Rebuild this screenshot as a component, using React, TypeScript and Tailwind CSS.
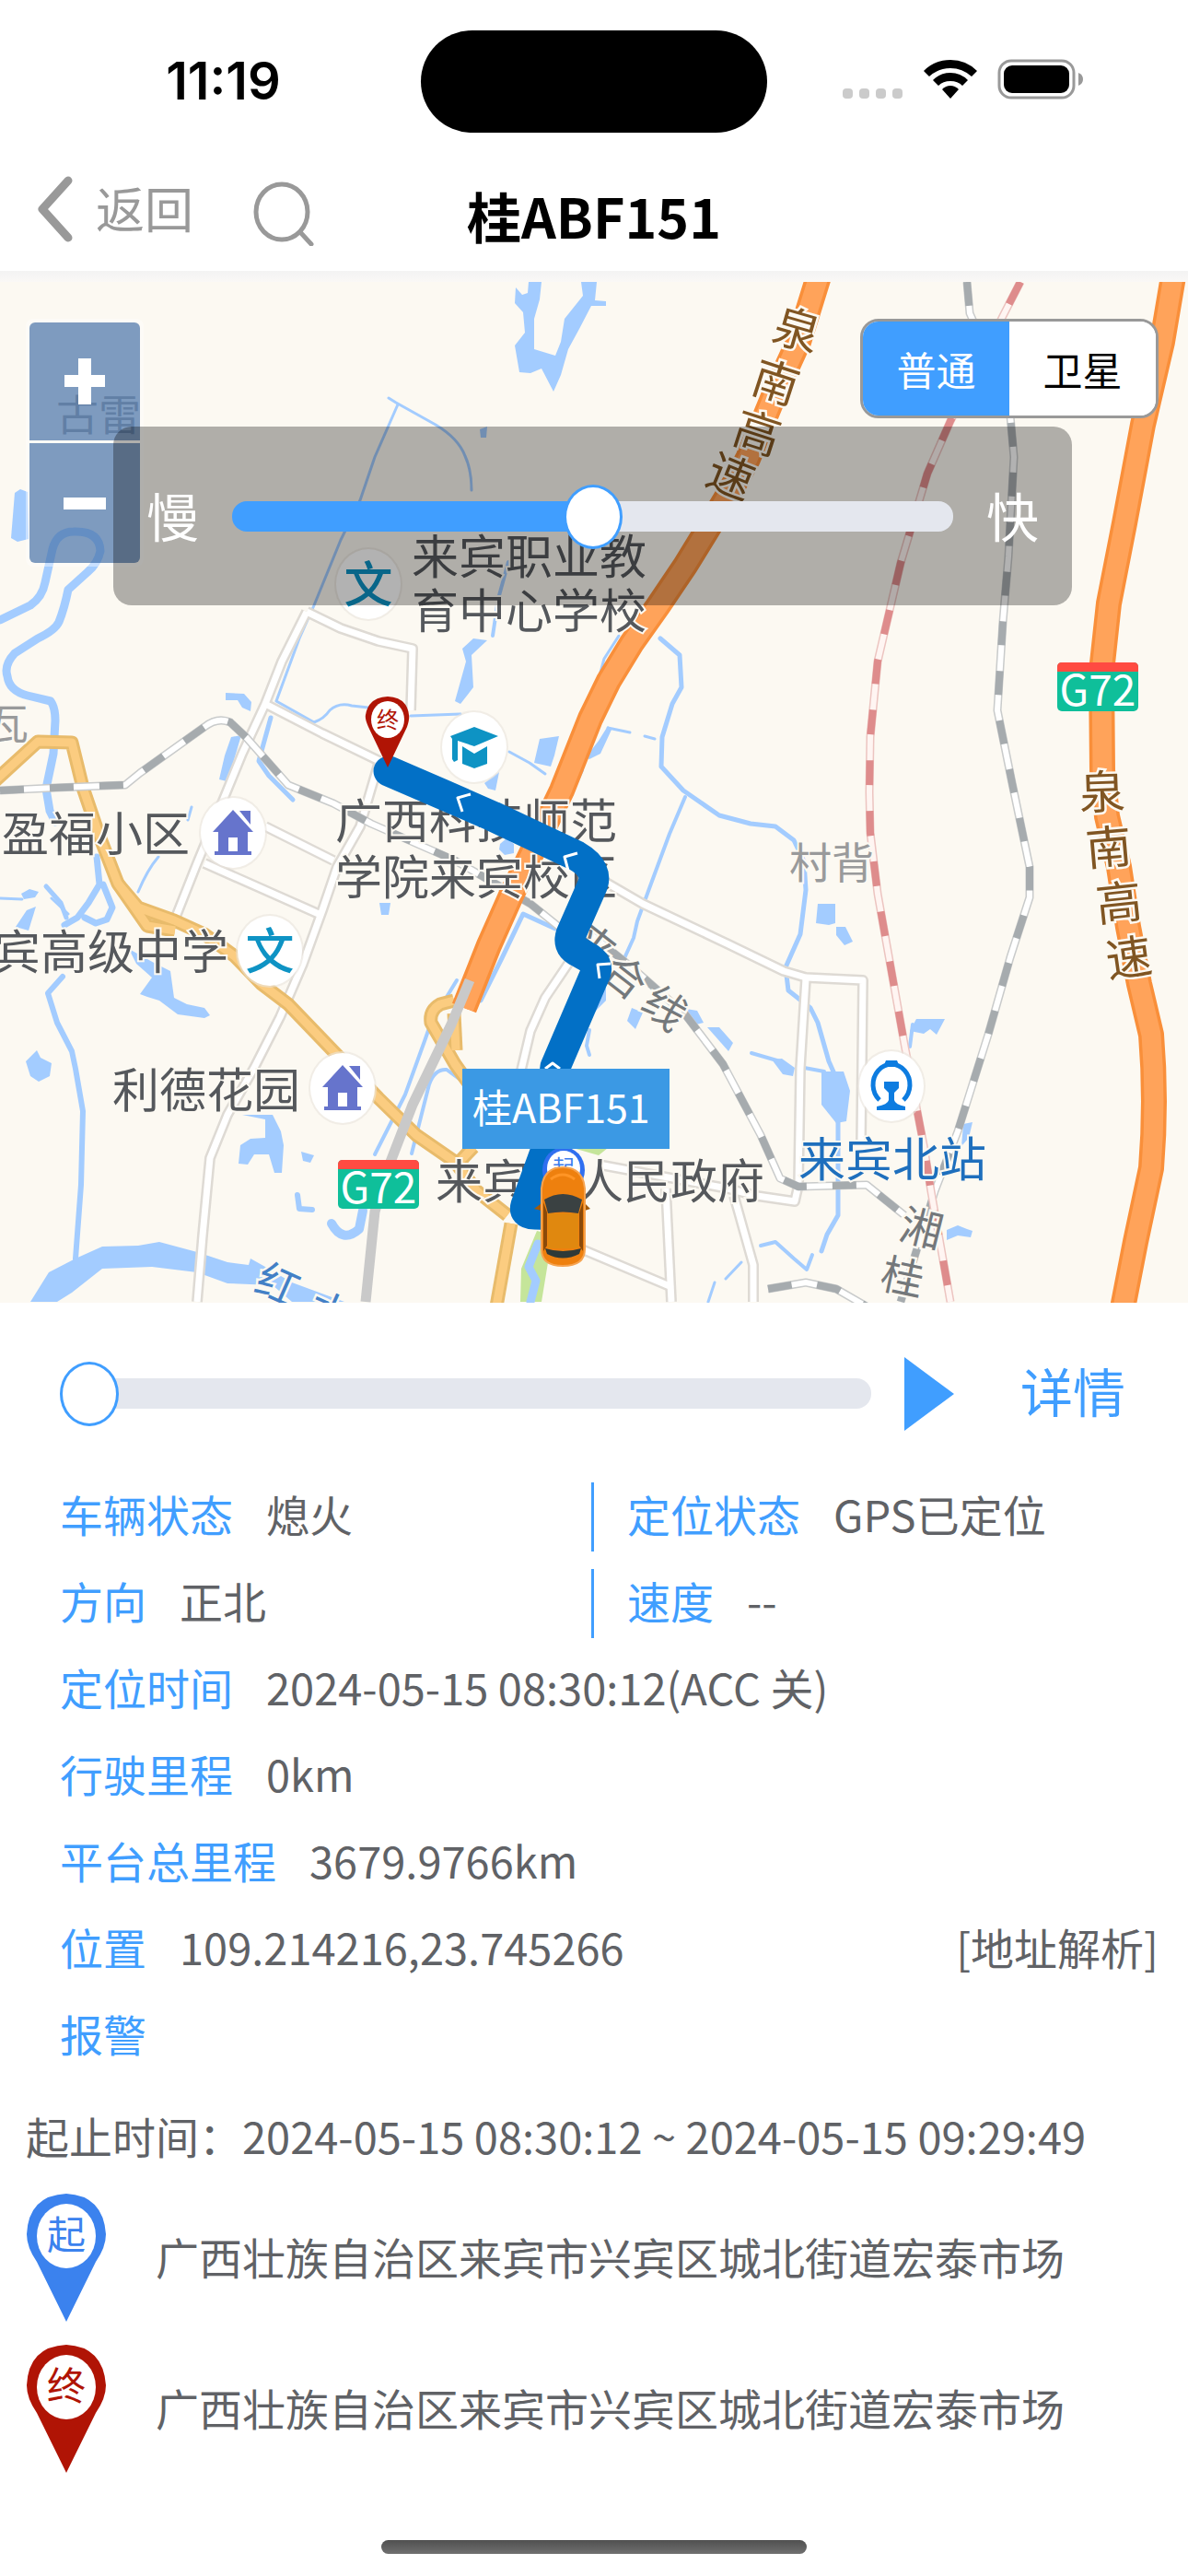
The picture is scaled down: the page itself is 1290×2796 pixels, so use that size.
import { useState } from "react";

type Label = { text: string; x: number; y: number };
type TurnedGlyph = Label & { angle: number };

const streams = [
  { w: 9, d: "M0 673 L33 657 Q46 648 49 632 L57 596 Q62 577 80 577 Q108 576 109 598 Q106 612 95 621 L74 640 Q70 660 64 675 Q60 684 41 693 L16 709 Q4 722 8 734 Q10 750 30 755 L55 761 Q60 768 60 782 L58 818 L50 856 L54 880 L60 892" },
  { w: 3, d: "M422 432 L430 437 L473 461 Q498 476 505 495 Q512 510 512 532" },
  { w: 3, d: "M432 439 L407 496 L391 543 L370 586 L341 657 L325 693 L300 761 L341 784 Q352 780 358 771 Q368 762 382 766 L400 768 M446 777 L500 775" },
  { w: 4, d: "M535 690 L541 650 L552 610" },
  { w: 5, d: "M294 779 L281 826 L292 842 L318 868" },
  { w: 3, d: "M553 816 L575 828 L592 840" },
  { w: 3, d: "M648 745 L656 715 L672 690" },
  { w: 5, d: "M717 693 L738 711 L740 746 L730 764 L719 800 L718 832 L742 858 L781 885 L815 894 L842 897 L862 912 L873 935 L875 966 L869 1014 L853 1050 L856 1075 L880 1094 L888 1110 L900 1152 L908 1170" },
  { w: 4, d: "M744 865 L727 905 L707 959 L692 1000 L688 1018 L678 1040" },
  { w: 3, d: "M660 790 L684 795 M700 799 L711 802" },
  { w: 4, d: "M632 836 L620 862" },
  { w: 5, d: "M910 1210 L910 1319 L898 1340 L892 1358" },
  { w: 4, d: "M816 1143 L847 1152 M868 1158 L895 1163" },
  { w: 4, d: "M988 1136 L991 1112" },
  { w: 4, d: "M826 1352 L842 1348 L862 1366 L876 1378 L882 1362" },
  { w: 3, d: "M769 1413 L776 1392 M788 1388 L805 1370" },
  { w: 6, d: "M68 1060 L52 1078 L62 1110 L78 1141 L82 1160 L90 1206 L88 1286 L82 1366" },
  { w: 7, d: "M105 930 L108 960 L96 980 L84 996 L70 1004 M112 960 L122 985 L116 998 L104 1002 L92 996" },
  { w: 3, d: "M0 975 L24 976 M56 975 L74 992 M150 968 Q160 944 172 930 M208 876 L204 890" },
  { w: 5, d: "M50 962 L66 980 L72 996" },
  { w: 6, d: "M323 1297 L325 1312 L339 1313" },
  { w: 10, d: "M360 1328 Q372 1350 390 1334 L394 1314" },
  { w: 4, d: "M496 1064 L468 1110 L461 1130 L440 1188 L407 1253" },
  { w: 5, d: "M603 1008 L568 992 L545 1040 L522 1086" },
  { w: 4, d: "M447 1252 L466 1177 Q472 1160 485 1161 L500 1172" },
  { w: 4, d: "M640 1118 L637 1135 L640 1145" },
];

const ponds = [
  "574,306 588,306 586,325 580,346 580,379 603,386 609,371 613,346 633,321 631,306 648,306 646,326 658,327 658,332 642,332 629,357 617,379 609,407 601,425 588,400 576,405 564,404 559,375 570,361 568,339 559,329 560,312 567,320 573,318",
  "16,535 22,531 30,534 31,585 19,588 12,584",
  "521,466 529,463 528,475 522,475",
  "514,693 529,695 512,711 514,746 500,764 494,761 506,718 502,704",
  "245,752 265,753 273,762 272,772 263,768 258,760 245,760",
  "251,800 262,798 254,825 246,848 238,846 244,820",
  "586,802 607,799 602,820 598,832 580,828",
  "660,788 664,792 652,818 640,824 636,822 650,804",
  "543,916 550,910 558,916 558,926 548,928 542,922",
  "892,1163 916,1163 923,1184 919,1217 908,1219 892,1199",
  "838,1150 849,1149 863,1159 861,1168 850,1166",
  "888,981 907,981 907,1002 900,1004 886,1002",
  "908,1006 918,1006 926,1022 917,1026 908,1015",
  "988,1119 995,1106 1026,1106 1017,1123 1010,1117 1003,1122",
  "768,1115 781,1115 796,1132 791,1141",
  "686,1094 698,1099 690,1117 681,1108",
  "745,1095 757,1097 764,1110 756,1112",
  "1028,1335 1040,1330 1050,1334 1056,1336 1054,1343 1040,1341 1028,1346",
  "1046,1220 1056,1218 1052,1235 1044,1244",
  "33,1413 53,1381 82,1366 111,1353 150,1352 173,1348 214,1359 247,1370 270,1373 272,1366 288,1375 317,1392 374,1413 317,1413 296,1395 247,1393 214,1381 165,1375 111,1377 78,1403 62,1413",
  "28,1152 40,1140 44,1148 56,1154 54,1168 42,1174 33,1168",
  "23,970 32,965 42,968 38,974 26,976",
  "17,1006 29,988 39,984 31,1010",
  "152,1079 165,1061 148,1046 140,1030 169,1046 185,1054 189,1083 203,1090 222,1094 228,1102 222,1105 193,1101 173,1086 160,1082",
  "259,1263 261,1243 272,1236 288,1235 288,1215 263,1210 296,1210 305,1228 308,1243 306,1273 298,1273 292,1253 276,1253 269,1264",
  "327,1250 341,1254 337,1262 329,1260",
  "412,980 424,980 422,993 414,993",
  "526,850 542,838 538,858 530,856",
  "646,1066 658,1070 658,1086 646,1098",
];

const minorRoads = [
  "M333 664 L306 718 L288 764 L263 818 L247 857 L214 937 L191 995",
  "M333 664 L370 682 L411 696 L448 704 L446 771",
  "M288 764 L350 796 L412 826",
  "M411 829 L391 897 L366 941 L350 988 L329 1046 L304 1104 L276 1159 L247 1210 L228 1257 L220 1341 L214 1413",
  "M222 937 L346 992",
  "M288 897 L362 934",
  "M617 1046 L592 1083 L576 1119 L564 1170",
  "M655 956 L698 981 L789 1024 L851 1054 L875 1061 L937 1064 L935 1240",
  "M875 1062 L869 1159 L867 1286 L863 1304 L822 1298 L790 1290 L650 1264",
  "M723 1290 L729 1413",
  "M797 1298 L818 1373 L818 1413",
  "M632 1356 L727 1396",
];

const arterials = [
  "M-6 848 L41 805 L78 806 L90 855 L107 905 L128 959 L160 1005 L190 1010",
  "M128 959 L150 985 L189 999 L222 1014 L255 1038 L284 1068 L313 1090 L362 1141 L411 1192 L452 1232 L494 1261 L518 1293 L551 1319",
  "M555 1328 L539 1418",
  "M493 1086 L478 1090 Q466 1097 468 1110 L494 1155 L512 1180",
  "M493 1100 L495 1140",
  "M514 1245 L498 1262",
];

const railways = [
  "M1050 306 L1053 340 Q1080 400 1096 440 L1101 496 L1095 604 L1089 675 L1083 771 L1099 850 L1118 941 L1118 974 L1097 1039 L1073 1123 L1040 1228 L1015 1293 L978 1413",
  "M0 858 L60 855 L136 852 L152 839 L222 789 Q236 778 250 784 L267 800 L313 852 L362 872 L403 894 L494 934 L576 981 L612 1010 L645 1017 L686 1050 L744 1101 L785 1155 L826 1232 L847 1279 L867 1288 L941 1286 L982 1319",
  "M834 1399 L875 1392 L908 1399 L941 1418",
];

const expressLine =
  "M1108 306 L1089 343 L1032 457 L1007 514 L978 611 L953 718 L945 800 L944 860 L945 904 L953 970 L982 1133 L1003 1243 L1011 1293 L1032 1413";

const motorways = [
  "M889 300 L867 371 L840 430 L812 498 L789 540 L768 575 L744 614 L715 657 L686 698 L661 739 L641 780 L610 858 L555 972 L531 1026 L504 1094",
  "M1274 300 L1262 371 L1241 461 L1221 568 L1204 655 L1196 729 L1197 836 L1202 886 L1215 941 L1225 1006 L1237 1068 L1250 1123 Q1256 1195 1250 1268 L1233 1348 L1219 1420",
];

const placeLabels: Label[] = [
  { text: "来宾职业教", x: 447, y: 623 },
  { text: "育中心学校", x: 447, y: 682 },
  { text: "广西科技师范", x: 364, y: 910 },
  { text: "学院来宾校区", x: 364, y: 971 },
  { text: "盈福小区", x: 2, y: 924 },
  { text: "宾高级中学", x: -7, y: 1052 },
  { text: "利德花园", x: 122, y: 1202 },
  { text: "来宾市人民政府", x: 473, y: 1301 },
];

const villageLabels: Label[] = [
  { text: "古雷", x: 61, y: 467 },
  { text: "瓦", x: -15, y: 802 },
  { text: "村背", x: 857, y: 953 },
];

const motorwayGlyphs: TurnedGlyph[] = [
  { text: "泉", x: 865, y: 359, angle: 16 },
  { text: "南", x: 842, y: 416, angle: 18 },
  { text: "高", x: 822, y: 471, angle: 18 },
  { text: "速", x: 793, y: 518, angle: 22 },
  { text: "泉", x: 1197, y: 861, angle: -2 },
  { text: "南", x: 1204, y: 921, angle: -5 },
  { text: "高", x: 1215, y: 981, angle: -6 },
  { text: "速", x: 1226, y: 1041, angle: -8 },
];

const railwayGlyphs: TurnedGlyph[] = [
  { text: "来", x: 645, y: 1026, angle: 38 },
  { text: "合", x: 679, y: 1060, angle: 38 },
  { text: "线", x: 722, y: 1094, angle: 38 },
  { text: "湘", x: 1001, y: 1333, angle: 14 },
  { text: "桂", x: 980, y: 1386, angle: 12 },
];

const riverGlyphs: TurnedGlyph[] = [
  { text: "红", x: 302, y: 1394, angle: 24 },
  { text: "水", x: 358, y: 1424, angle: 24 },
];

function Turned({ glyphs, size, fill }: { glyphs: TurnedGlyph[]; size: number; fill: string }) {
  return (
    <g fill={fill} fontSize={size} textAnchor="middle" stroke="#fcf9f2" strokeWidth="5" paintOrder="stroke">
      {glyphs.map((g) => (
        <text key={g.text + g.x} x={g.x} y={g.y + 17} transform={`rotate(${g.angle} ${g.x} ${g.y})`}>
          {g.text}
        </text>
      ))}
    </g>
  );
}

function Poi({ x, y, children }: { x: number; y: number; children: React.ReactNode }) {
  return (
    <g transform={`translate(${x} ${y})`}>
      <ellipse rx="37" ry="40" fill="#e9e5dd" opacity="0.6" />
      <ellipse rx="35" ry="38" fill="#fff" />
      {children}
    </g>
  );
}

function House() {
  return (
    <g fill="#6674cc">
      <path d="M0 -25 L22 -1 L16 -1 L16 20 L20 20 L20 24 L-20 24 L-20 20 L-16 20 L-16 -1 L-22 -1 Z" />
      <path d="M7 -24 L19 -24 L19 -9 Z" />
      <path d="M-5 5 H5 V20 H-5 Z" fill="#fff" />
    </g>
  );
}

function SchoolMark() {
  return (
    <text y="20" textAnchor="middle" fontSize="53" fontWeight="500" fill="#0e93c4">
      文
    </text>
  );
}

function RoadShield({ x, y }: { x: number; y: number }) {
  return (
    <g transform={`translate(${x} ${y})`}>
      <rect width="88" height="53" rx="5" fill="#0fbf9a" />
      <path d="M0 10 V5 Q0 0 5 0 H83 Q88 0 88 5 V10 Z" fill="#ff4b42" />
      <text x="44" y="47" textAnchor="middle" fontSize="46" fill="#fff">
        G72
      </text>
    </g>
  );
}

function Car() {
  return (
    <g>
      <path d="M588 1306 L580 1312 L588 1314 Z M635 1306 L641 1312 L635 1314 Z" fill="#a35a0a" />
      <path d="M588 1290 Q590 1267 611 1267 Q633 1267 635 1290 V1356 Q635 1374 611 1374 Q588 1374 588 1356 Z" fill="#ee800e" stroke="#f6a350" strokeWidth="2" />
      <path d="M590 1305 V1358 L594 1352 V1316 Z M633 1305 V1358 L629 1352 V1316 Z" fill="#8a4a0a" />
      <path d="M591 1302 Q611 1290 632 1302 L628 1317 Q611 1314 595 1317 Z" fill="#3a4142" />
      <rect x="595" y="1317" width="33" height="38" fill="#e0880f" />
      <path d="M592 1355 Q611 1361 631 1355 L629 1361 Q611 1370 594 1361 Z" fill="#2f3a38" />
      <path d="M598 1280 Q611 1270 624 1280" fill="none" stroke="#ff9526" strokeWidth="3" />
    </g>
  );
}

function MapCanvas({ plate }: { plate: string }) {
  return (
    <svg
      viewBox="0 306 1290 1108"
      preserveAspectRatio="xMidYMid slice"
      className="block h-full w-full"
      role="img"
      aria-label="行驶轨迹地图"
    >
      <rect y="306" width="1290" height="1108" fill="#fcf9f2" />
      <path d="M565 1413 L566 1377 L583 1336 L600 1340 L588 1413 Z M622 1246 L660 1246 L650 1254 Z" fill="#c5e59a" />
      <g fill="none" stroke="#a3ccff" strokeLinecap="round" strokeLinejoin="round">
        {streams.map((s) => (
          <path key={s.d} d={s.d} strokeWidth={s.w} />
        ))}
        <path d="M584 1350 L574 1375 L582 1390 L576 1413" strokeWidth="9" />
      </g>
      <g fill="#a3ccff">
        {ponds.map((p) => (
          <polygon key={p} points={p} />
        ))}
      </g>
      <g fill="none" strokeLinejoin="round">
        {minorRoads.map((d) => (
          <path key={d} d={d} stroke="#dedad4" strokeWidth="12" />
        ))}
        {minorRoads.map((d) => (
          <path key={d} d={d} stroke="#fff" strokeWidth="7" />
        ))}
        {arterials.map((d) => (
          <path key={d} d={d} stroke="#e8bb6b" strokeWidth="15" />
        ))}
        {arterials.map((d) => (
          <path key={d} d={d} stroke="#fbcc80" strokeWidth="9" />
        ))}
        {railways.map((d) => (
          <g key={d}>
            <path d={d} stroke="#c9cbcb" strokeWidth="9" />
            <path d={d} stroke="#fff" strokeWidth="6" />
            <path d={d} stroke="#a6abae" strokeWidth="8" strokeDasharray="26 28" />
          </g>
        ))}
        <path d={expressLine} stroke="#ecc4c0" strokeWidth="9" />
        <path d={expressLine} stroke="#fff5f2" strokeWidth="6" />
        <path d={expressLine} stroke="#de8c8c" strokeWidth="8" strokeDasharray="27 28" />
        {motorways.map((d) => (
          <g key={d}>
            <path d={d} stroke="#f98f3a" strokeWidth="28" />
            <path d={d} stroke="#ffa35a" strokeWidth="21" />
          </g>
        ))}
        <path d="M510 1064 L490 1112 L448 1199 L424 1261 L407 1315 L397 1413" stroke="#c9c9c9" strokeWidth="11" />
      </g>

      <g fill="#999a9b" fontSize="46" stroke="#fcf9f2" strokeWidth="4" paintOrder="stroke">
        {villageLabels.map((l) => (
          <text key={l.text} x={l.x} y={l.y}>
            {l.text}
          </text>
        ))}
      </g>
      <g fill="#55585c" fontSize="51" stroke="#fcf9f2" strokeWidth="4" paintOrder="stroke">
        {placeLabels.map((l) => (
          <text key={l.text} x={l.x} y={l.y}>
            {l.text}
          </text>
        ))}
        <text x="867" y="1277" fill="#1e6fbd">
          来宾北站
        </text>
      </g>
      <Turned glyphs={motorwayGlyphs} size={50} fill="#805522" />
      <Turned glyphs={railwayGlyphs} size={46} fill="#74787b" />
      <Turned glyphs={riverGlyphs} size={46} fill="#4380c6" />

      <Poi x={400} y={634}><SchoolMark /></Poi>
      <Poi x={293} y={1032}><SchoolMark /></Poi>
      <Poi x={253} y={904}><House /></Poi>
      <Poi x={372} y={1181}><House /></Poi>
      <Poi x={515} y={811}>
        <g fill="#0e93c4">
          <path d="M0 -22 L26 -12 L0 -1 L-18 -7 V14 L-22 16 L-24 13 V-9 L-26 -12 Z" />
          <path d="M-13 -1 L0 7 L14 -1 V18 L0 23 L-13 18 Z" />
        </g>
      </Poi>
      <Poi x={968} y={1179}>
        <path d="M-13 15 A20 22 0 1 1 13 15" fill="none" stroke="#0d7ce0" strokeWidth="5" />
        <path d="M-6 -28 H6 L9 -21 H-9 Z M-8 -5 H8 V2 L3 7 V15 Q4 20 15 22 V26 H-16 V22 Q-4 20 -3 15 V7 L-8 2 Z" fill="#0d7ce0" />
      </Poi>
      <RoadShield x={1148} y={719} />
      <RoadShield x={367} y={1259} />

      <path
        d="M422 837 L480 862 L535 886 L626 929 Q652 944 642 964 L620 1014 Q616 1026 626 1032 L640 1040 Q652 1048 645 1060 L603 1158 L592 1250 L571 1308 Q568 1318 580 1318 L612 1319"
        fill="none"
        stroke="#0270c6"
        strokeWidth="33"
        strokeLinecap="round"
        strokeLinejoin="round"
      />
      <g fill="none" stroke="#fff" strokeWidth="3" strokeLinejoin="round">
        <path d="M511 862 L497 866 L502 881" />
        <path d="M627 926 L613 930 L617 945" />
        <path d="M663 1046 L649 1047 L651 1062" />
        <path d="M592 1160 L600 1154 L608 1160" />
      </g>

      <path d="M421 833 L400 789 Q396 780 397 776 Q400 757 421 756 Q442 757 444 776 Q445 780 442 789 Z" fill="#b01405" />
      <ellipse cx="421" cy="781" rx="18" ry="20" fill="#fff" />
      <text x="421" y="790" textAnchor="middle" fontSize="24" fill="#b01405">
        终
      </text>

      <ellipse cx="612" cy="1270" rx="23" ry="25" fill="#2f6ff0" />
      <ellipse cx="612" cy="1268" rx="18" ry="19" fill="#fff" />
      <text x="612" y="1276" textAnchor="middle" fontSize="24" fill="#3b7ded">
        起
      </text>
      <rect x="502" y="1160" width="225" height="87" fill="#3b99e4" />
      <text x="513" y="1219" fontSize="43" fill="#fff">
        {plate}
      </text>
      <Car />
    </svg>
  );
}

function PinIcon({ color, char }: { color: string; char: string }) {
  return (
    <svg viewBox="0 0 87 142" className="h-[142px] w-[87px] shrink-0" aria-hidden="true">
      <path d="M44 139 L12 74 Q1 58 1 44 Q3 2 44 0 Q84 2 87 44 Q87 58 76 74 Z" fill={color} />
      <ellipse cx="44" cy="46" rx="32" ry="35" fill="#fff" />
      <text x="44" y="60" textAnchor="middle" fontSize="42" fill={color}>
        {char}
      </text>
    </svg>
  );
}

const sliderClass =
  "h-[70px] min-w-0 flex-1 cursor-pointer appearance-none bg-transparent [&::-webkit-slider-runnable-track]:h-[33px] [&::-webkit-slider-runnable-track]:rounded-2xl [&::-webkit-slider-runnable-track]:bg-[linear-gradient(to_right,#409eff_var(--fill),#e4e7ee_var(--fill))] [&::-webkit-slider-thumb]:-mt-[18px] [&::-webkit-slider-thumb]:h-[70px] [&::-webkit-slider-thumb]:w-[64px] [&::-webkit-slider-thumb]:appearance-none [&::-webkit-slider-thumb]:rounded-[50%] [&::-webkit-slider-thumb]:border-[3px] [&::-webkit-slider-thumb]:border-[#409eff] [&::-webkit-slider-thumb]:bg-white";

function Slider({ label, value, onChange }: { label: string; value: number; onChange: (v: number) => void }) {
  return (
    <input
      type="range"
      aria-label={label}
      min={0}
      max={100}
      value={value}
      onChange={(e) => onChange(Number(e.target.value))}
      className={sliderClass}
      style={{ "--fill": `${value}%` } as React.CSSProperties}
    />
  );
}

function Field({ label, children }: { label: string; children?: React.ReactNode }) {
  return (
    <div className="flex min-w-0 flex-1 items-center gap-9 pb-2">
      <dt className="text-[#409eff]">{label}</dt>
      <dd>{children}</dd>
    </div>
  );
}

function StatusBar() {
  return (
    <div className="grid h-[176px] grid-cols-[1fr_376px_1fr] items-center">
      <time className="pl-7 text-center font-['Inter'] text-[56px] leading-none font-semibold">11:19</time>
      <div className="h-[111px] rounded-full bg-black" />
      <div className="flex items-center justify-end gap-[22px] pr-[113px] pb-1">
        <svg viewBox="0 0 66 42" className="h-[42px] w-[66px]" fill="#cbcbcb" aria-hidden="true">
          <rect x="0" y="31" width="11" height="11" rx="4" />
          <rect x="18" y="31" width="11" height="11" rx="4" />
          <rect x="36" y="31" width="11" height="11" rx="4" />
          <rect x="54" y="31" width="11" height="11" rx="4" />
        </svg>
        <svg viewBox="0 0 58 42" className="h-[42px] w-[58px]" aria-hidden="true">
          <path d="M29 0 Q46 0 58 12 L52 18 Q42 9 29 9 Q16 9 6 18 L0 12 Q12 0 29 0 Z" />
          <path d="M29 14 Q40 14 48 22 L42 28 Q37 23 29 23 Q21 23 16 28 L10 22 Q18 14 29 14 Z" />
          <path d="M29 28 Q34 28 38 32 L29 42 L20 32 Q24 28 29 28 Z" />
        </svg>
        <svg viewBox="0 0 94 44" className="h-[44px] w-[94px]" aria-hidden="true">
          <rect x="2" y="2" width="81" height="40" rx="13" fill="none" stroke="#999" strokeWidth="3" />
          <rect x="7" y="7" width="71" height="30" rx="9" />
          <path d="M88 15 Q93 17 93 22 Q93 27 88 29 Z" fill="#999" />
        </svg>
      </div>
    </div>
  );
}

export default function App() {
  const plate = "桂ABF151";
  const [speed, setSpeed] = useState(50);
  const [progress, setProgress] = useState(0);
  const [satellite, setSatellite] = useState(false);
  const address = "广西壮族自治区来宾市兴宾区城北街道宏泰市场";

  return (
    <main className="flex min-h-screen flex-col bg-white font-['Noto_Sans_CJK_SC',sans-serif] text-[47px] leading-none text-[#606266]">
      <header className="bg-white text-black">
        <StatusBar />
        <div className="grid h-[118px] grid-cols-[1fr_auto_1fr] items-center px-10">
          <div className="flex items-center gap-16 pb-4 text-[#999]">
            <button type="button" className="flex items-center gap-6 text-[53px]">
              <svg viewBox="0 0 40 72" className="h-[72px] w-10" fill="none" stroke="currentColor" strokeWidth="9" strokeLinecap="round" strokeLinejoin="round" aria-hidden="true">
                <path d="M34 5 L6 36 L34 67" />
              </svg>
              <span className="pb-1">返回</span>
            </button>
            <button type="button" aria-label="搜索" className="pt-2">
              <svg viewBox="0 0 68 72" className="h-[72px] w-[68px]" fill="none" stroke="currentColor" strokeWidth="5" strokeLinecap="round" aria-hidden="true">
                <ellipse cx="32" cy="35" rx="28" ry="30" />
                <path d="M52 57 L64 70" />
              </svg>
            </button>
          </div>
          <h1 className="pb-1 text-[59px] font-bold">{plate}</h1>
        </div>
        <div className="h-3 bg-linear-to-b from-[#f3f3f3] to-[#faf8f6]" />
      </header>

      <section className="relative h-[1108px] overflow-hidden">
        <MapCanvas plate={plate} />

        <div className="absolute top-10 left-7 flex flex-col rounded-lg bg-white/40 p-1">
          <div className="flex flex-col gap-[3px]">
            <button type="button" aria-label="放大" className="flex h-32 w-[120px] items-center justify-center rounded-t-md bg-[#003c88]/50">
              <svg viewBox="0 0 46 50" className="h-[50px] w-[46px]" fill="#fff" aria-hidden="true">
                <path d="M16 0 H30 V18 H45 V31 H30 V50 H16 V31 H1 V18 H16 Z" />
              </svg>
            </button>
            <button type="button" aria-label="缩小" className="flex h-[130px] w-[120px] items-center justify-center rounded-b-md bg-[#003c88]/50">
              <svg viewBox="0 0 46 13" className="h-[13px] w-[46px]" fill="#fff" aria-hidden="true">
                <path d="M0 0 H46 V13 H0 Z" />
              </svg>
            </button>
          </div>
        </div>

        <div className="absolute top-10 right-8 grid h-[108px] w-[324px] grid-cols-2 overflow-hidden rounded-[20px] border-[3px] border-[#999] bg-white text-[43px]">
          <button
            type="button"
            aria-pressed={!satellite}
            onClick={() => setSatellite(false)}
            className={satellite ? "bg-white text-black" : "bg-[#409eff] text-white"}
          >
            普通
          </button>
          <button
            type="button"
            aria-pressed={satellite}
            onClick={() => setSatellite(true)}
            className={satellite ? "bg-[#409eff] text-white" : "bg-white text-black"}
          >
            卫星
          </button>
        </div>

        <div className="absolute top-[157px] right-[126px] left-[123px] flex h-[194px] items-center gap-9 rounded-[20px] bg-black/30 px-9 text-[57px] text-white">
          <span className="pb-1">慢</span>
          <Slider label="播放速度" value={speed} onChange={setSpeed} />
          <span className="pb-1">快</span>
        </div>
      </section>

      <section className="flex h-[185px] items-center pt-3 pr-[68px] pl-[65px]">
        <Slider label="播放进度" value={progress} onChange={setProgress} />
        <button type="button" aria-label="播放" className="ml-9">
          <svg viewBox="0 0 54 80" className="h-20 w-[54px]" fill="#409eff" aria-hidden="true">
            <path d="M0 0 L54 40 L0 80 Z" />
          </svg>
        </button>
        <button type="button" className="ml-[72px] pb-2 text-[57px] text-[#409eff]">
          详情
        </button>
      </section>

      <dl className="flex flex-col pr-8 pl-[65px] [&>div]:h-[94px]">
        <div className="-mr-8 grid grid-cols-[577px_1fr] items-center">
          <Field label="车辆状态">熄火</Field>
          <div className="flex h-[75px] border-l-[3px] border-[#409eff] pl-9">
            <Field label="定位状态">GPS已定位</Field>
          </div>
        </div>
        <div className="-mr-8 grid grid-cols-[577px_1fr] items-center">
          <Field label="方向">正北</Field>
          <div className="flex h-[75px] border-l-[3px] border-[#409eff] pl-9">
            <Field label="速度">--</Field>
          </div>
        </div>
        <div className="flex"><Field label="定位时间">2024-05-15 08:30:12(ACC 关)</Field></div>
        <div className="flex"><Field label="行驶里程">0km</Field></div>
        <div className="flex"><Field label="平台总里程">3679.9766km</Field></div>
        <div className="flex items-center">
          <Field label="位置">109.214216,23.745266</Field>
          <dd className="pb-2">
            <button type="button">[地址解析]</button>
          </dd>
        </div>
        <div className="flex"><Field label="报警" /></div>
      </dl>

      <p className="flex h-[124px] items-center px-7 pb-1">起止时间：2024-05-15 08:30:12 ~ 2024-05-15 09:29:49</p>

      <ul className="flex flex-col gap-[22px] px-7">
        <li className="flex items-center gap-[54px]">
          <PinIcon color="#3b82ee" char="起" />
          <span className="pb-2">{address}</span>
        </li>
        <li className="flex items-center gap-[54px]">
          <PinIcon color="#b01405" char="终" />
          <span className="pb-2">{address}</span>
        </li>
      </ul>

      <footer className="mt-auto flex justify-center pt-6 pb-6">
        <div className="h-[15px] w-[462px] rounded-full bg-linear-to-b from-[#505050] to-[#707070]" />
      </footer>
    </main>
  );
}
